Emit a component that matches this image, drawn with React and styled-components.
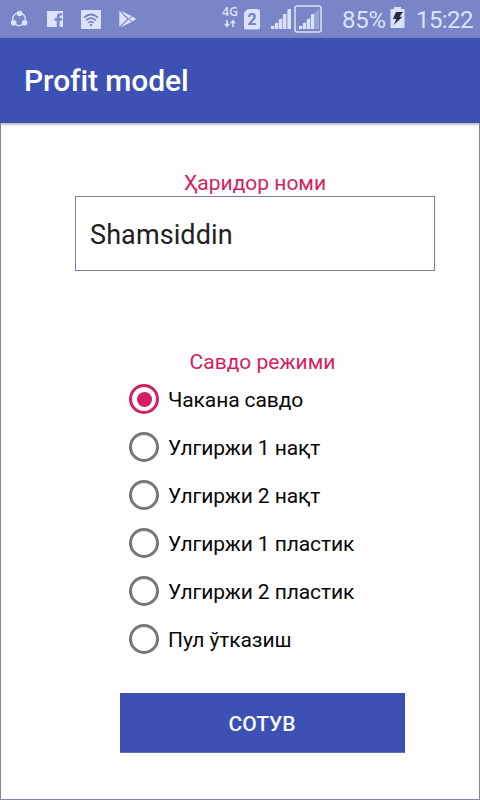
import React, { useState } from "react";
import styled, { createGlobalStyle } from "styled-components";

const GlobalStyle = createGlobalStyle`
  *, *::before, *::after { box-sizing: border-box; }
  html, body { margin: 0; background: #fefefe; }
  body, button, input { font-family: Roboto, "Noto Sans", sans-serif; }
`;

const Screen = styled.div`
  width: 480px;
  height: 800px;
  display: flex;
  flex-direction: column;
  overflow: hidden;
  background: #fefefe;
`;

const StatusBar = styled.header`
  height: 38px;
  flex: none;
  display: flex;
  align-items: center;
  background: #7985c6;
  color: #dbe2f9;
`;

const Notifications = styled.div`
  display: flex;
  align-items: center;
  gap: 18px;
  padding-left: 10px;
  width: 221px;
`;

const StatusIcon = styled.svg`
  display: block;
  flex: none;
  fill: currentColor;
  margin-left: ${(p) => p.$left || 0}px;
  margin-bottom: ${(p) => p.$lift || 0}px;
`;

const Network = styled.div`
  width: 18px;
  height: 24px;
  display: flex;
  flex-direction: column;
  align-items: center;
  gap: 1px;
  margin-bottom: 2px;
  font: 600 12.5px/12px "Open Sans", sans-serif;
`;

const SimCard = styled.div`
  margin-left: 5px;
  width: 16px;
  height: 21px;
  border-radius: 3px;
  background: currentColor;
  clip-path: polygon(25% 0, 100% 0, 100% 100%, 0 100%, 0 20%);
`;

const SimNumber = styled.span`
  display: block;
  text-align: center;
  color: #7480bf;
  font: 700 16px/22px Roboto, sans-serif;
`;

const StatusText = styled.span`
  margin-left: ${(p) => p.$left}px;
  width: ${(p) => p.$width}px;
  white-space: nowrap;
  font-size: 24px;
  line-height: 38px;
  padding-top: 2px;
  letter-spacing: ${(p) => p.$spacing || 0}px;
`;

const AppBar = styled.div`
  position: relative;
  z-index: 1;
  height: 85px;
  flex: none;
  display: flex;
  align-items: center;
  padding-left: 24px;
  background: #3c51b3;
  box-shadow: 0 1px 3px rgba(40, 55, 65, 0.5);
`;

const Title = styled.h1`
  margin: 0;
  color: #fff;
  font-size: 30px;
  line-height: 36px;
  font-weight: 500;
  letter-spacing: -0.12px;
`;

const Body = styled.main`
  flex: 1;
  display: flex;
  flex-direction: column;
  padding: 47px 44px 0 74px;
  border: 1px solid #8087a8;
  border-top: 0;
`;

const Label = styled.div`
  height: 26px;
  color: #d51e60;
  font-size: 21px;
  line-height: 26px;
  text-align: center;
`;

const NameInput = styled.input`
  width: 360px;
  height: 75px;
  padding: 2px 14px 0;
  border: 1px solid #777fa8;
  border-radius: 0;
  outline: 0;
  background: #fefefe;
  color: #212121;
  font-size: 27px;
  letter-spacing: 0.1px;
`;

const ModeGroup = styled.section`
  width: 285px;
  margin: 78px 0 0 45px;
`;

const Option = styled.button`
  width: 100%;
  height: 48px;
  display: flex;
  align-items: center;
  padding: 0 0 0 9px;
  border: 0;
  background: none;
  color: #080808;
  font-size: 21px;
  line-height: 26px;
  text-align: left;
`;

const Radio = styled.span`
  width: 30px;
  height: 30px;
  flex: none;
  display: flex;
  align-items: center;
  justify-content: center;
  margin-right: 9px;
  border: 3px solid ${(p) => (p.$checked ? "#d51e60" : "#777")};
  border-radius: 50%;

  &::after {
    content: "";
    width: 15px;
    height: 15px;
    border-radius: 50%;
    background: ${(p) => (p.$checked ? "#d51e60" : "transparent")};
  }
`;

const OptionText = styled.span`
  padding-top: 2px;
  letter-spacing: -0.1px;
`;

const SellButton = styled.button`
  width: 285px;
  height: 60px;
  margin: 30px 0 0 45px;
  padding: 2px 1px 0 0;
  border: 0;
  border-bottom: 1px solid #6672ac;
  background: #3c51b3;
  color: #f7f9ff;
  font-size: 21px;
  font-weight: 500;
`;

const MODES = [
  "Чакана савдо",
  "Улгиржи 1 нақт",
  "Улгиржи 2 нақт",
  "Улгиржи 1 пластик",
  "Улгиржи 2 пластик",
  "Пул ўтказиш",
];

function ShareIcon() {
  return (
    <StatusIcon width="18" height="18" viewBox="0 0 18 18">
      <circle cx="9" cy="9.3" r="6.4" fill="none" stroke="currentColor" strokeWidth="1.3" />
      <circle cx="9.6" cy="3.5" r="2.8" />
      <circle cx="3.7" cy="12.8" r="2.8" />
      <circle cx="14.6" cy="12.8" r="2.8" />
    </StatusIcon>
  );
}

function FacebookIcon() {
  return (
    <StatusIcon $left={1} width="16" height="16" viewBox="0 0 16 16">
      <path d="M0 0h16v16h-3.4V9.8h2.2l.4-2.5h-2.6V5.8c0-.9.4-1.3 1.3-1.3h1.4V2.2h-2C10.9 2.2 9.8 3.5 9.8 5.6v1.7H7.7v2.5h2.1V16H0z" />
    </StatusIcon>
  );
}

function WifiIcon() {
  return (
    <StatusIcon width="20" height="19" viewBox="0 0 20 19">
      <rect width="20" height="19" rx="1" />
      <g fill="none" stroke="#7985c6" strokeWidth="1.7">
        <path d="M3 7.6Q10 1.4 17 7.6M5.2 10.3Q10 6 14.8 10.3M7.4 12.8Q10 10.5 12.6 12.8" />
      </g>
      <circle cx="10" cy="15" r="1.3" fill="#7985c6" />
    </StatusIcon>
  );
}

function PlayIcon() {
  return (
    <StatusIcon width="18" height="18" viewBox="0 0 18 18">
      <path d="M.3.8v16L8.2 9z" />
      <path d="M1.3.4 12.6 6 9.6 8.5zM1.3 17.5 12.6 11.9 9.6 9.3zM13.3 6.4 17.3 9l-4 2.5L10.5 9z" />
    </StatusIcon>
  );
}

export default function App() {
  const [name, setName] = useState("Shamsiddin");
  const [mode, setMode] = useState(0);

  return (
    <>
      <GlobalStyle />
      <Screen>
        <StatusBar>
          <Notifications>
            <ShareIcon />
            <FacebookIcon />
            <WifiIcon />
            <PlayIcon />
          </Notifications>
          <Network>
            4G
            <StatusIcon width="12" height="9" viewBox="0 0 12 9">
              <path d="M2.2 1h1.6v3.8H6L3 8.4 0 4.8h2.2zM8.2 8h1.6V4.2H12L9 .6 6 4.2h2.2z" />
            </StatusIcon>
          </Network>
          <SimCard>
            <SimNumber>2</SimNumber>
          </SimCard>
          <StatusIcon $left={10} $lift={1} width="21" height="21" viewBox="0 0 21 21">
            <path d="M1 18h3v3H1zM5 15h3v6H5zM9 11h3v10H9zM13 6h3v15h-3zM17.5 1H21v20h-3.5z" />
            <path d="M0 21 21 1v20z" opacity=".35" />
          </StatusIcon>
          <StatusIcon $left={3} $lift={1} width="28" height="28" viewBox="0 0 28 28">
            <rect x="1" y="1" width="26" height="26" rx="2" fill="none" stroke="currentColor" strokeWidth="1.5" />
            <path d="M5 21h3v3H5zM9 18h3v6H9zM13 14h3v10h-3zM17 9h3v15h-3z" />
            <path d="M4 24 25 4v20z" opacity=".35" />
          </StatusIcon>
          <StatusText $left={20} $width={43} $spacing={-0.3}>85%</StatusText>
          <StatusIcon $left={5} $lift={3} width="15" height="21" viewBox="0 0 15 21">
            <path d="M4 0h7v2h3.5v19H.5V2H4z" />
            <path d="M6 5h7L9.5 9.7h3L3.7 18l2.7-6H3z" fill="#252d45" />
          </StatusIcon>
          <StatusText $left={11} $width={60} $spacing={-0.6}>15:22</StatusText>
        </StatusBar>
        <AppBar>
          <Title>Profit model</Title>
        </AppBar>
        <Body>
          <Label>Ҳаридор номи</Label>
          <NameInput
            aria-label="Ҳаридор номи"
            spellCheck={false}
            value={name}
            onChange={(e) => setName(e.target.value)}
          />
          <ModeGroup role="radiogroup">
            <Label>Савдо режими</Label>
            {MODES.map((text, i) => (
              <Option key={text} role="radio" aria-checked={mode === i} onClick={() => setMode(i)}>
                <Radio $checked={mode === i} />
                <OptionText>{text}</OptionText>
              </Option>
            ))}
          </ModeGroup>
          <SellButton>СОТУВ</SellButton>
        </Body>
      </Screen>
    </>
  );
}
